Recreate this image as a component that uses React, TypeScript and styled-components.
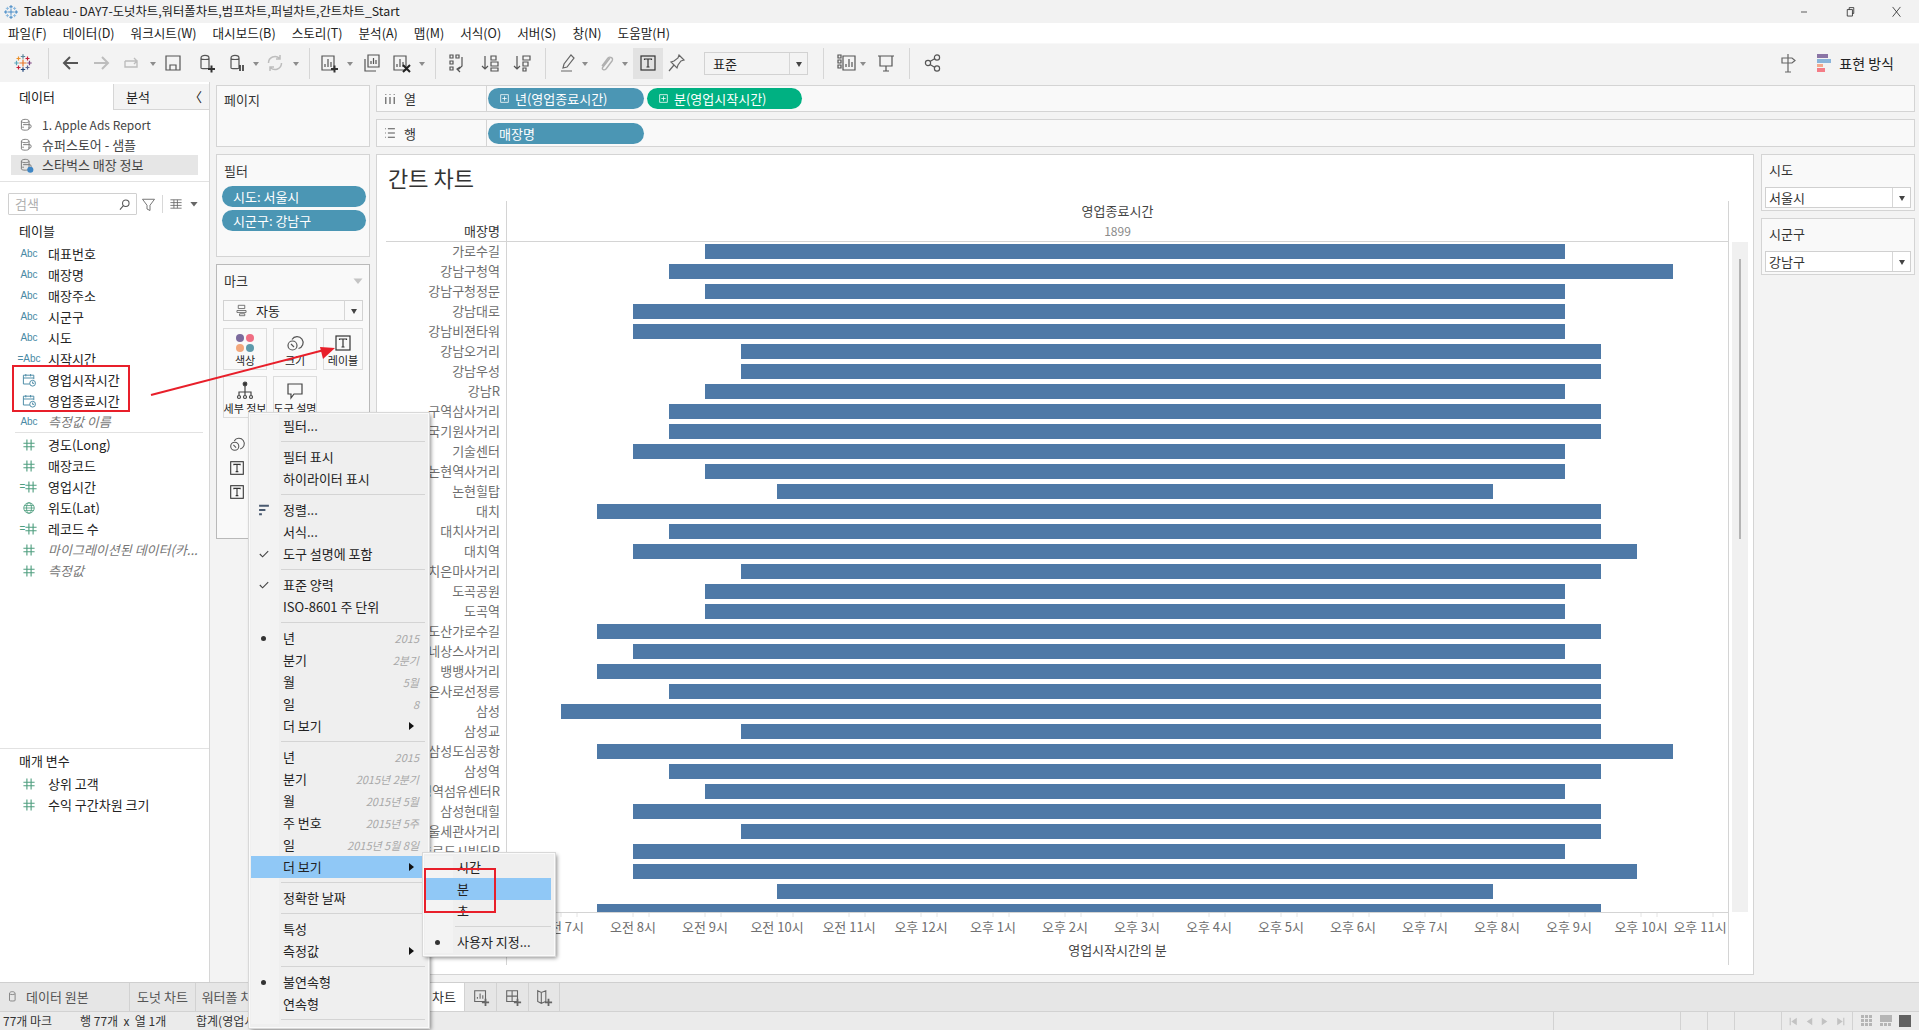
import React from "react";
import styled, { createGlobalStyle } from "styled-components";

const Global = createGlobalStyle`
  html, body { margin: 0; padding: 0; width: 1919px; height: 1030px; overflow: hidden; background: #f3f3f3; }
  body { font-family: "Noto Sans CJK KR", "Noto Sans", sans-serif; font-size: 13px; color: #222; }
  * { box-sizing: border-box; }
`;

const Page = styled.div`
  position: relative; width: 1919px; height: 1030px; overflow: hidden;
  display: flex; flex-direction: column; background: #f3f3f3;
`;

/* ---- window chrome ---- */
const TitleBar = styled.div`
  height: 23px; background: #f2f2f2; display: flex; align-items: center; padding-left: 3px; font-size: 12.35px; line-height: 23px; color: #222; flex: none;
`;
const TitleText = styled.span` margin-left: 5px; flex: 1; `;
const WinBtn = styled.span` width: 46px; height: 23px; display: flex; align-items: center; justify-content: center; `;
const MenuBar = styled.div`
  height: 20px; background: #fff; display: flex; padding-left: 8px; gap: 16px; line-height: 20px; font-size: 12.6px; flex: none;
`;
const Toolbar = styled.div`
  height: 39px; background: #f3f3f3; display: flex; align-items: center; padding-left: 11px; flex: none; border-top: 1px solid #f8f8f8;
`;
const Tool = styled.span<{ $ml: number; $w?: number; $active?: boolean }>`
  flex: none; margin-left: ${p => p.$ml}px; width: ${p => p.$w ?? 24}px; height: ${p => (p.$active ? 31 : 24)}px;
  display: flex; align-items: center; justify-content: center;
  background: ${p => (p.$active ? "#e2e2e2" : "transparent")};
`;
const ToolCaret = styled.span<{ $ml: number }>`
  flex: none; margin-left: ${p => p.$ml}px; width: 8px; display: flex; justify-content: center;
  &::after { content: ""; border: 3px solid transparent; border-top: 4px solid #8c8c8c; margin-top: 4px; }
`;
const ToolSep = styled.span<{ $ml: number }>`
  flex: none; margin-left: ${p => p.$ml}px; width: 1px; height: 31px; background: #d6d6d6;
`;
const ToolSelect = styled.div`
  flex: none; margin-left: 15px; width: 104px; height: 23px; border: 1px solid #d2d2d2; background: #f3f3f3;
  display: flex; align-items: center; padding-left: 8px; position: relative; line-height: 21px;
`;
const SelectText = styled.span` flex: 1; `;
const SelectBtn = styled.span`
  width: 18px; height: 21px; border-left: 1px solid #d6d6d6; display: flex; align-items: center; justify-content: center;
  &::after { content: ""; border: 3.5px solid transparent; border-top: 5px solid #444; margin-top: 5px; }
`;
const Spacer = styled.span` flex: 1; `;
const ShowMe = styled.span` margin-left: 17px; margin-right: 25px; display: flex; align-items: center; gap: 8px; line-height: 20px; font-size: 14px; `;

/* ---- main ---- */
const Main = styled.div` flex: 1; display: flex; min-height: 0; `;
const LeftPanel = styled.div`
  width: 210px; flex: none; background: #fff; border-right: 1px solid #d6d6d6; display: flex; flex-direction: column;
`;
const PaneTabs = styled.div` height: 28px; display: flex; flex: none; padding-top: 2px; `;
const PaneTab = styled.div<{ $on?: boolean }>`
  width: ${p => (p.$on ? 113 : 96)}px; flex: none; height: 26px; line-height: 26px; padding-left: ${p => (p.$on ? 19 : 12)}px;
  background: ${p => (p.$on ? "#fff" : "#f3f3f3")}; border-bottom: ${p => (p.$on ? "none" : "1px solid #d6d6d6")};
  border-left: ${p => (p.$on ? "none" : "1px solid #d6d6d6")};
  display: flex; justify-content: space-between; padding-right: 7px;
`;
const Sources = styled.div` padding: 5px 11px 7px; height: 72px; border-bottom: 1px solid #e2e2e2; flex: none; `;
const Source = styled.div<{ $on?: boolean; $latin?: boolean }>`
  height: 20px; line-height: 20px; display: flex; align-items: center; padding-left: 7px; gap: 7px; color: #444;
  font-size: ${p => (p.$latin ? "12px" : "13px")};
  background: ${p => (p.$on ? "#e6e6e6" : "transparent")};
`;
const SearchRow = styled.div` height: 38px; display: flex; align-items: center; padding: 6px 0 0 8px; flex: none; `;
const SearchBox = styled.div`
  width: 129px; height: 22px; border: 1px solid #d0d0d0; border-radius: 1px; display: flex; align-items: center; justify-content: space-between;
  padding: 0 5px 0 6px; color: #b0b0b0; line-height: 20px;
`;
const SmallSep = styled.span` width: 1px; height: 18px; background: #d8d8d8; margin: 0 6px 0 6px; `;
const FilterGap = styled.span` width: 4px; `;
const CaretGap = styled.span` width: 7px; `;
const FieldHead = styled.div` height: 23px; line-height: 22px; padding-left: 19px; font-size: 13px; flex: none; color: #222; `;
const FieldList = styled.div` flex: 1; display: flex; flex-direction: column; min-height: 0; `;
const FieldRow = styled.div<{ $italic?: boolean }>`
  height: 21px; flex: none; display: flex; align-items: center; padding-left: 16px; line-height: 21px; white-space: nowrap;
  color: ${p => (p.$italic ? "#777" : "#222")}; font-style: ${p => (p.$italic ? "italic" : "normal")};
`;
const FieldIcon = styled.span`
  width: 26px; flex: none; display: flex; justify-content: center; align-items: center; margin-right: 6px;
  font-family: "Liberation Sans", sans-serif; font-size: 10px; font-style: normal; color: #4a8aa5; letter-spacing: 0;
`;
const CalcMark = styled.span` color: #4f9e7f; margin-right: -1px; `;
const FieldDivider = styled.div` height: 1px; background: #e2e2e2; margin: 0 6px 1px 15px; flex: none; `;
const ParamPanel = styled.div` height: 234px; border-top: 1px solid #e2e2e2; padding-top: 1px; flex: none; `;

const Workspace = styled.div` flex: 1; display: flex; gap: 6px; padding: 3px 4px 7px 6px; min-width: 0; `;
const SideCol = styled.div` width: 154px; flex: none; display: flex; flex-direction: column; gap: 7px; `;
const SideCard = styled.div<{ $h: number; $dark?: boolean }>`
  height: ${p => p.$h}px; flex: none; background: #f9f9f9; border: 1px solid ${p => (p.$dark ? "#b9b9b9" : "#d4d4d4")};
  padding: 0 6px;
`;
const CardLabel = styled.div<{ $lh?: number }>`
  height: 31px; line-height: ${p => p.$lh ?? 31}px; padding-left: 1px; color: #333; display: flex; justify-content: space-between; align-items: flex-start;
  & > svg { margin-top: 11px; }
`;
const Pill = styled.div<{ $green?: boolean; $w: number }>`
  width: ${p => p.$w}px; height: 21px; border-radius: 11px; background: ${p => (p.$green ? "#00b182" : "#4b96b4")};
  color: #fff; line-height: 19px; display: flex; align-items: center; gap: 5px; padding-left: 11px; flex: none;
`;
const FilterPills = styled.div` display: flex; flex-direction: column; gap: 3px; margin-left: -1px; `;
const MarkSelect = styled.div`
  height: 21px; margin-top: 4px; border: 1px solid #d2d2d2; background: #f9f9f9; display: flex; align-items: center; padding-left: 11px; gap: 8px; line-height: 19px;
`;
const MarkGrid = styled.div` display: grid; grid-template-columns: 44px 44px 40px; grid-auto-rows: 42px; gap: 6px; margin-top: 7px; `;
const MarkBtn = styled.div`
  border: 1px solid #dcdcdc; display: flex; flex-direction: column; align-items: center; padding-top: 4px; font-size: 11px; line-height: 14px; white-space: nowrap; color: #222;
`;
const MarkDetail = styled.div` display: flex; flex-direction: column; gap: 6px; padding: 17px 0 0 5px; `;

const ContentCol = styled.div` flex: 1; min-width: 0; display: flex; flex-direction: column; gap: 7px; `;
const Shelf = styled.div<{ $h: number }>`
  height: ${p => p.$h}px; flex: none; background: #f9f9f9; border: 1px solid #d4d4d4; display: flex;
`;
const ShelfLabel = styled.div`
  width: 110px; flex: none; border-right: 1px solid #d4d4d4; display: flex; align-items: center; gap: 7px; padding-left: 6px; color: #333;
`;
const ShelfPills = styled.div` display: flex; gap: 3px; align-items: center; padding-left: 1px; `;
const Workrow = styled.div` flex: 1; min-height: 0; display: flex; gap: 7px; `;
const ChartCard = styled.div`
  width: 1378px; flex: none; background: #fff; border: 1px solid #d4d4d4; padding-left: 9px; display: flex; flex-direction: column;
`;
const ChartTitle = styled.div` height: 46px; line-height: 45px; font-size: 22px; color: #333; padding-left: 2px; flex: none; `;
const HeadRow = styled.div` height: 41px; flex: none; display: flex; `;
const HeadLabel = styled.div`
  width: 121px; flex: none; border-right: 1px solid #d4d4d4; border-bottom: 1px solid #d4d4d4; text-align: right; padding: 21px 6px 0 0; line-height: 18px; color: #333;
`;
const HeadPlot = styled.div`
  width: 1222px; flex: none; border-right: 1px solid #d4d4d4; border-bottom: 1px solid #d4d4d4; text-align: center; color: #444; line-height: 20px;
`;
const HeadSub = styled.div` color: #8a8a8a; font-size: 12px; `;
const BodyRow = styled.div` height: 670px; flex: none; display: flex; `;
const Rows = styled.div` width: 1343px; flex: none; height: 670px; overflow: hidden; `;
const Row = styled.div` height: 20px; display: flex; `;
const RowLabel = styled.div`
  width: 121px; flex: none; border-right: 1px solid #d4d4d4; text-align: right; padding-right: 6px; line-height: 17px; color: #6e6e6e; white-space: nowrap; overflow: hidden;
`;
const RowPlot = styled.div` flex: 1; border-right: 1px solid #d4d4d4; `;
const Bar = styled.div` height: 15px; margin-top: 2px; background: #4e79a7; `;
const ScrollTrack = styled.div` width: 16px; margin-left: 3px; height: 670px; background: #f0f0f0; display: flex; justify-content: center; padding-top: 17px; flex: none; `;
const ScrollThumb = styled.div` width: 2px; height: 280px; background: #b4b4b4; `;
const AxisRow = styled.div` height: 53px; flex: none; display: flex; `;
const AxisBlank = styled.div` width: 121px; flex: none; border-right: 1px solid #d4d4d4; `;
const AxisPlot = styled.div` width: 1222px; flex: none; border-right: 1px solid #d4d4d4; border-top: 1px solid #d4d4d4; display: flex; flex-direction: column; `;
const AxisTicks = styled.div` display: flex; padding: 2px 0 0 18px; height: 21px; line-height: 16px; color: #6e6e6e; `;
const AxisTick = styled.span<{ $shift?: boolean }>` width: 72px; flex: none; text-align: center; white-space: nowrap; margin-left: ${p => (p.$shift ? "-13px" : "0")}; `;
const AxisTitle = styled.div` text-align: center; color: #444; line-height: 20px; margin-top: 2px; `;

const FilterCol = styled.div` width: 154px; flex: none; display: flex; flex-direction: column; gap: 7px; `;
const QuickFilter = styled.div` height: 57px; background: #f9f9f9; border: 1px solid #d4d4d4; flex: none; padding: 0 3px; `;
const QuickLabel = styled.div` height: 29px; line-height: 29px; padding-left: 4px; color: #333; `;
const QuickSelect = styled.div`
  height: 21px; margin-top: 3px; border: 1px solid #d0d0d0; background: #fff; display: flex; line-height: 19px; padding-left: 3px; color: #333;
`;
const QuickBtn = styled.span`
  width: 18px; margin-left: auto; border-left: 1px solid #d6d6d6; display: flex; align-items: center; justify-content: center;
  &::after { content: ""; border: 3px solid transparent; border-top: 5px solid #444; margin-top: 4px; }
`;

/* ---- bottom ---- */
const TabBar = styled.div` height: 29px; flex: none; background: #e6e6e6; border-top: 1px solid #cfcfcf; display: flex; `;
const Tab = styled.div<{ $w: number; $on?: boolean; $start?: boolean }>`
  width: ${p => p.$w}px; flex: none; border-right: 1px solid #d2d2d2; display: flex; align-items: center; justify-content: ${p => (p.$start ? "flex-start" : "center")}; gap: 6px;
  padding-left: ${p => (p.$start ? 6 : 0)}px;
  line-height: 26px; color: ${p => (p.$on ? "#333" : "#555")}; background: ${p => (p.$on ? "#fff" : "transparent")}; white-space: nowrap; overflow: hidden;
`;
const StatusBar = styled.div` height: 19px; flex: none; background: #ebebeb; border-top: 1px solid #d2d2d2; display: flex; line-height: 18px; color: #333; font-size: 12px; `;
const StatusLeft = styled.div` width: 1553px; flex: none; display: flex; padding-left: 3px; white-space: nowrap; `;
const StatusItem = styled.span<{ $w: number }>` width: ${p => p.$w}px; flex: none; `;
const StatusCell = styled.div<{ $w: number }>`
  width: ${p => p.$w}px; flex: none; border-left: 1px solid #d2d2d2; display: flex; align-items: center; justify-content: space-around; padding: 0 4px;
`;

/* ---- overlays ---- */
const RedBox = styled.div<{ $sub?: boolean }>`
  position: absolute; border: 2px solid #e81f2a;
  left: ${p => (p.$sub ? 424 : 12)}px; top: ${p => (p.$sub ? 868 : 365)}px;
  width: ${p => (p.$sub ? 72 : 118)}px; height: ${p => (p.$sub ? 45 : 47)}px; z-index: ${p => (p.$sub ? 30 : 5)};
`;
const ArrowSvg = styled.svg` position: absolute; left: 150px; top: 340px; z-index: 5; `;
const CtxMenu = styled.div`
  position: absolute; left: 249px; top: 413px; width: 180px; z-index: 10; background: #efefef;
  border: 1px solid #fafafa; outline: 1px solid #d8d8d8; box-shadow: 2px 2px 4px rgba(0,0,0,.45); padding: 1px 0 3px;
`;
const SubMenu = styled(CtxMenu)` left: 423px; top: 853px; width: 132px; padding: 2px 0 2px; z-index: 20; `;
const MItem = styled.div<{ $hl?: boolean; $rail: number }>`
  height: 22px; display: flex; align-items: center; line-height: 22px; padding-right: 6px; margin: 0 3px 0 1px;
  background: ${p => (p.$hl ? "#90c8f6" : "transparent")}; color: #222;
`;
const MRail = styled.span<{ $hl?: boolean; $rail: number }>`
  width: ${p => p.$rail}px; flex: none; display: flex; justify-content: center; align-items: center; align-self: stretch;
  padding-right: 3px; background: ${p => (p.$hl ? "transparent" : "#f3f3f3")}; margin-right: 4px;
`;
const MText = styled.span` flex: 1; white-space: nowrap; `;
const MHint = styled.span` font-style: italic; font-size: 11px; color: #a8a8a8; white-space: nowrap; `;
const MArrow = styled.span`
  width: 0; height: 0; margin-right: 5px; border-left: 5px solid #111; border-top: 4px solid transparent; border-bottom: 4px solid transparent;
`;
const MSep = styled.div<{ $rail: number }>`
  height: 9px; display: flex; align-items: center; margin-left: 1px;
  &::before { content: ""; width: ${p => p.$rail}px; flex: none; align-self: stretch; background: #f3f3f3; }
  &::after { content: ""; flex: 1; height: 1px; background: #d4d4d4; margin: 0 3px 0 2px; }
`;
const Dot = styled.span` width: 5px; height: 5px; border-radius: 50%; background: #333; `;

/* ---- icons (drawings) ---- */
const S = styled.svg` display: block; flex: none; `;
type IcoProps = { size?: number; c?: string; w?: number; children: React.ReactNode };
const Ico = ({ size = 20, c = "#5a5a5a", w = 1.2, children }: IcoProps) => (
  <S width={size} height={size} viewBox="0 0 20 20" fill="none" stroke={c} strokeWidth={w}>{children}</S>
);
const Cyl = () => <path d="M5 5c0-3.5 8-3.5 8 0v10c0 1-8 1-8 0zM5 5c0 2 8 2 8 0" />;
const TBox = () => (<><rect x="3" y="3" width="14" height="14" stroke="#333" /><path d="M6.5 7V6h7v1M10 6v8M8.5 14h3" stroke="#333" /></>);
const SizeIco = () => (<><circle cx="7.5" cy="12.5" r="4.5" stroke="#555" /><path d="M7 6.5a6 6 0 1 1 6.5 9M6 11l3 3" stroke="#555" /></>);

const Logo = ({ size = 20, mono }: { size?: number; mono?: boolean }) => {
  const ps: [number, number, number, string][] = [
    [10, 10, 3.6, mono ? "#3f86c4" : "#e8762b"], [10, 3.5, 2.2, mono ? "#3f86c4" : "#5b879b"], [10, 16.5, 2.2, mono ? "#3f86c4" : "#1f447a"],
    [3.5, 10, 2.2, mono ? "#3f86c4" : "#59a5b8"], [16.5, 10, 2.2, mono ? "#3f86c4" : "#7a3f7d"],
    [5.5, 5.5, 2, mono ? "#8ab8de" : "#eb912b"], [14.5, 5.5, 2, mono ? "#8ab8de" : "#c72037"],
    [5.5, 14.5, 2, mono ? "#8ab8de" : "#c72037"], [14.5, 14.5, 2, mono ? "#8ab8de" : "#5b6591"],
  ];
  return (
    <S width={size} height={size} viewBox="0 0 20 20" fill="none" strokeWidth={1.2}>
      {ps.map(([x, y, r, col], i) => <path key={i} d={`M${x - r} ${y}h${2 * r}M${x} ${y - r}v${2 * r}`} stroke={col} />)}
    </S>
  );
};
const Hash = ({ c = "#4f9e7f" }: { c?: string }) => (
  <Ico size={14} c={c} w={1.6}><path d="M7 2v16M13 2v16M2 7.5h16M2 12.5h16" /></Ico>
);
const Cal = () => (
  <Ico size={16} c="#4a8aa5" w={1.2}>
    <path d="M11 15H3V4h13v5M3 7.5h13M6 2.5v3M12 2.5v3" /><circle cx="14.5" cy="14" r="3.6" /><path d="M14.5 12v2.2h2" />
  </Ico>
);
const DbIco = ({ on }: { on?: boolean }) => (
  <Ico size={17} c="#777" w={1.1}>
    <path d="M4 5c0-3 9-3 9 0v9c0 2-9 2-9 0zM4 5c0 2.2 9 2.2 9 0M6 9h8c2 0 2 4 0 4h-2M7 12h-2" />
    {on && <circle cx="14.5" cy="15" r="3.6" fill="#3f86c4" stroke="none" />}
  </Ico>
);

const fieldIcon = (t: string) => {
  switch (t) {
    case "abc": return <FieldIcon>Abc</FieldIcon>;
    case "cabc": return <FieldIcon>=Abc</FieldIcon>;
    case "cal": return <FieldIcon><Cal /></FieldIcon>;
    case "cnum": return <FieldIcon><CalcMark>=</CalcMark><Hash /></FieldIcon>;
    case "geo": return <FieldIcon><Ico size={14} c="#4f9e7f"><circle cx="10" cy="10" r="7.5" /><ellipse cx="10" cy="10" rx="3.5" ry="7.5" /><path d="M2.5 10h15M3.5 6.5h13M3.5 13.5h13" /></Ico></FieldIcon>;
    default: return <FieldIcon><Hash /></FieldIcon>;
  }
};

const dims: [string, string, boolean?][] = [
  ["abc", "대표번호"], ["abc", "매장명"], ["abc", "매장주소"], ["abc", "시군구"], ["abc", "시도"], ["cabc", "시작시간"],
  ["cal", "영업시작시간"], ["cal", "영업종료시간"], ["abc", "측정값 이름", true],
];
const meas: [string, string, boolean?][] = [
  ["num", "경도(Long)"], ["num", "매장코드"], ["cnum", "영업시간"], ["geo", "위도(Lat)"], ["cnum", "레코드 수"],
  ["num", "마이그레이션된 데이터(카...", true], ["num", "측정값", true],
];
const bars: [string, number, number][] = [
  ["가로수길", 705, 1565], ["강남구청역", 669, 1673], ["강남구청정문", 705, 1565], ["강남대로", 633, 1565], ["강남비젼타워", 633, 1565],
  ["강남오거리", 741, 1601], ["강남우성", 741, 1601], ["강남R", 705, 1565], ["구역삼사거리", 669, 1601], ["국기원사거리", 669, 1601],
  ["기술센터", 633, 1565], ["논현역사거리", 705, 1565], ["논현힐탑", 777, 1493], ["대치", 597, 1601], ["대치사거리", 669, 1601],
  ["대치역", 633, 1637], ["대치은마사거리", 741, 1601], ["도곡공원", 705, 1565], ["도곡역", 705, 1565], ["도산가로수길", 597, 1601],
  ["르네상스사거리", 633, 1565], ["뱅뱅사거리", 597, 1601], ["봉은사로선정릉", 669, 1601], ["삼성", 561, 1601], ["삼성교", 741, 1601],
  ["삼성도심공항", 597, 1673], ["삼성역", 669, 1601], ["삼성역섬유센터R", 705, 1565], ["삼성현대힐", 633, 1601], ["서울세관사거리", 741, 1601],
  ["석촌르도시빌딩R", 633, 1565], ["선릉", 633, 1637], ["선릉역", 777, 1493], ["선정릉", 597, 1601],
];
const PLOT_X = 507;
const hours = ["오전 7시", "오전 8시", "오전 9시", "오전 10시", "오전 11시", "오후 12시", "오후 1시", "오후 2시", "오후 3시", "오후 4시", "오후 5시", "오후 6시", "오후 7시", "오후 8시", "오후 9시", "오후 10시", "오후 11시"];
const tickPath = Array.from({ length: 17 }, (_, i) => `M${54 + 72 * i} 0v4M${70 + 72 * i} 0v4`).join("");

type M = { t?: string; hint?: string; mark?: "dot" | "check" | "sort"; arrow?: boolean; hl?: boolean; sep?: boolean };
const menu: M[] = [
  { t: "필터..." }, { sep: true }, { t: "필터 표시" }, { t: "하이라이터 표시" }, { sep: true },
  { t: "정렬...", mark: "sort" }, { t: "서식..." }, { t: "도구 설명에 포함", mark: "check" }, { sep: true },
  { t: "표준 양력", mark: "check" }, { t: "ISO-8601 주 단위" }, { sep: true },
  { t: "년", hint: "2015", mark: "dot" }, { t: "분기", hint: "2분기" }, { t: "월", hint: "5월" }, { t: "일", hint: "8" }, { t: "더 보기", arrow: true }, { sep: true },
  { t: "년", hint: "2015" }, { t: "분기", hint: "2015년 2분기" }, { t: "월", hint: "2015년 5월" }, { t: "주 번호", hint: "2015년 5주" }, { t: "일", hint: "2015년 5월 8일" }, { t: "더 보기", arrow: true, hl: true }, { sep: true },
  { t: "정확한 날짜" }, { sep: true }, { t: "특성" }, { t: "측정값", arrow: true }, { sep: true },
  { t: "불연속형", mark: "dot" }, { t: "연속형" }, { sep: true },
];
const sub: M[] = [{ t: "시간" }, { t: "분", hl: true }, { t: "초" }, { sep: true }, { t: "사용자 지정...", mark: "dot" }];

const renderMenu = (items: M[], rail: number) => items.map((m, i) => m.sep
  ? <MSep key={i} $rail={rail} />
  : (
    <MItem key={i} $hl={m.hl} $rail={rail}>
      <MRail $hl={m.hl} $rail={rail}>
        {m.mark === "dot" && <Dot />}
        {m.mark === "check" && <Ico size={14} c="#444" w={1.6}><path d="M4 10l4 4 8-8" /></Ico>}
        {m.mark === "sort" && <Ico size={14} c="#4a5a70" w={3}><path d="M3 4h14M3 10h9M3 16h4" /></Ico>}
      </MRail>
      <MText>{m.t}</MText>
      {m.hint && <MHint>{m.hint}</MHint>}
      {m.arrow && <MArrow />}
    </MItem>
  ));

export default function App() {
  return (
    <Page>
      <Global />
      <TitleBar>
        <Logo size={16} mono />
        <TitleText>Tableau - DAY7-도넛차트,워터폴차트,범프차트,퍼널차트,간트차트_Start</TitleText>
        <WinBtn><Ico size={12} c="#222"><path d="M5 10h10" /></Ico></WinBtn>
        <WinBtn><Ico size={13} c="#222"><path d="M5 7h8v10H5zM8 7V4h7v9h-2" /></Ico></WinBtn>
        <WinBtn><Ico size={13} c="#222"><path d="M4 3l12 15M16 3L4 18" /></Ico></WinBtn>
      </TitleBar>
      <MenuBar>
        {["파일(F)", "데이터(D)", "워크시트(W)", "대시보드(B)", "스토리(T)", "분석(A)", "맵(M)", "서식(O)", "서버(S)", "창(N)", "도움말(H)"].map(m => <span key={m}>{m}</span>)}
      </MenuBar>
      <Toolbar>
        <Tool $ml={0}><Logo /></Tool>
        <ToolSep $ml={13} />
        <Tool $ml={9}><Ico c="#555" w={2}><path d="M18 10H4M10 4l-6 6 6 6" /></Ico></Tool>
        <Tool $ml={8}><Ico c="#bdbdbd" w={2}><path d="M2 10h14M10 4l6 6-6 6" /></Ico></Tool>
        <Tool $ml={6}><Ico c="#bdbdbd" w={1.4}><path d="M3 8v6h12V8H3M12 5l3 3-3 3" /></Ico></Tool>
        <ToolCaret $ml={5} />
        <Tool $ml={4}><Ico c="#555"><path d="M3 3h14v14H3zM7 17v-5h6v5" /></Ico></Tool>
        <Tool $ml={9}><Ico c="#555"><Cyl /><path d="M12 16h7M15.5 12.5v7" strokeWidth={2} stroke="#333" /></Ico></Tool>
        <Tool $ml={6}><Ico c="#555"><Cyl /><path d="M14 12v6M17 12v6" stroke="#333" strokeWidth={1.6} /></Ico></Tool>
        <ToolCaret $ml={4} />
        <Tool $ml={3}><Ico c="#bdbdbd" w={1.5}><path d="M3.5 10a6.5 6.5 0 0 1 11-4.7M16.5 10a6.5 6.5 0 0 1-11 4.7M15 2v4h-4M5 18v-4h4" /></Ico></Tool>
        <ToolCaret $ml={5} />
        <ToolSep $ml={9} />
        <Tool $ml={7}><Ico c="#555"><path d="M3 3h12v14H3zM6 14v-3M9 14V6M12 14V9" /><path d="M12 16h7M15.5 12.5v7" strokeWidth={2} stroke="#333" /></Ico></Tool>
        <ToolCaret $ml={5} />
        <Tool $ml={6}><Ico c="#555"><path d="M6 2h11v12H6zM3 6v12h11M9 11V8M11.5 11V5M14 11V7" /></Ico></Tool>
        <Tool $ml={5}><Ico c="#555"><path d="M3 3h12v14H3zM6 14v-3M9 14V6M12 14V9" /><path d="M12 12l7 7M19 12l-7 7" strokeWidth={2} stroke="#222" /></Ico></Tool>
        <ToolCaret $ml={5} />
        <ToolSep $ml={9} />
        <Tool $ml={9}><Ico c="#555"><path d="M3 2h3v3H3zM9 2h3v3H9zM3 8h3v3H3zM3 14h3v3H3zM15 4v9l-3 3h-2M13 14l-3 2 3 3" /></Ico></Tool>
        <Tool $ml={9}><Ico c="#555"><path d="M5 3v13M2 13l3 3 3-3M11 3h5v4h-5zM11 9h7v4h-7zM11 15h7v3h-7z" /></Ico></Tool>
        <Tool $ml={8}><Ico c="#555"><path d="M5 3v13M2 13l3 3 3-3M11 3h7v4h-7zM11 9h5v4h-5zM11 15h3v3h-3z" /></Ico></Tool>
        <ToolSep $ml={11} />
        <Tool $ml={10}><Ico c="#666"><path d="M13 2l3 3-7 9-4 1 1-4zM3 18h11" /></Ico></Tool>
        <ToolCaret $ml={1} />
        <Tool $ml={5}><Ico c="#b0b0b0" w={1.4}><path d="M14 5l-7 9c-2 2 1 4 3 2l6-8c2-3-2-5-4-3l-6 8" /></Ico></Tool>
        <ToolCaret $ml={3} />
        <Tool $ml={4} $w={30} $active><Ico><TBox /></Ico></Tool>
        <Tool $ml={2}><Ico c="#666"><path d="M12 2l5 5-3 1-3 4-1 3-6-6 3-1 4-3zM7 12l-5 6" /></Ico></Tool>
        <ToolSelect><SelectText>표준</SelectText><SelectBtn /></ToolSelect>
        <ToolSep $ml={15} />
        <Tool $ml={10}><Ico c="#555"><path d="M2 2h3v3H2zM2 7h3v3H2zM2 12h3v3H2zM7 3h12v14H7zM10 14v-3M13 14V6M16 14V9" /></Ico></Tool>
        <ToolCaret $ml={1} />
        <Tool $ml={7}><Ico c="#555"><path d="M2 3h16M4 3v10h12V3M10 13v5M7 18h6" /></Ico></Tool>
        <ToolSep $ml={11} />
        <Tool $ml={11}><Ico c="#555"><circle cx="5" cy="10" r="2.6" /><circle cx="14" cy="4.5" r="2.6" /><circle cx="14" cy="15.5" r="2.6" /><path d="M7 8.5l5-3M7 11.5l5 3" /></Ico></Tool>
        <Spacer />
        <Tool $ml={0}><Ico c="#666"><path d="M10 1v18M7 19h6M4 5h10l3 2.5L14 10H4z" /></Ico></Tool>
        <ShowMe>
          <S width={14} height={18} viewBox="0 0 14 18"><rect x="0" y="0" width="11" height="4" fill="#8a74a5" /><rect x="0" y="5" width="14" height="4" fill="#8ab4d9" /><rect x="0" y="10" width="6" height="3" fill="#f3a98c" /><rect x="0" y="14" width="8" height="4" fill="#f47c86" /></S>
          표현 방식
        </ShowMe>
      </Toolbar>

      <Main>
        <LeftPanel>
          <PaneTabs>
            <PaneTab $on>데이터</PaneTab>
            <PaneTab>분석<span>〈</span></PaneTab>
          </PaneTabs>
          <Sources>
            <Source $latin><DbIco />1. Apple Ads Report</Source>
            <Source><DbIco />슈퍼스토어 - 샘플</Source>
            <Source $on><DbIco on />스타벅스 매장 정보</Source>
          </Sources>
          <SearchRow>
            <SearchBox>검색<Ico size={13} c="#555" w={1.6}><circle cx="12" cy="8" r="5" /><path d="M8 12l-5 6" /></Ico></SearchBox>
            <FilterGap />
            <Ico size={15} c="#666"><path d="M2 3h16l-6 8v7l-4-2v-5z" /></Ico>
            <SmallSep />
            <Ico size={14} c="#666"><path d="M2 4h16M2 8h16M2 12h16M2 16h16M7 4v12M12 4v12" /></Ico>
            <CaretGap />
            <Ico size={8} c="#666" w={0}><path d="M1 5h18L10 16z" fill="#666" /></Ico>
          </SearchRow>
          <FieldHead>테이블</FieldHead>
          <FieldList>
            {dims.map(([t, n, it]) => <FieldRow key={n} $italic={it}>{fieldIcon(t)}{n}</FieldRow>)}
            <FieldDivider />
            {meas.map(([t, n, it]) => <FieldRow key={n} $italic={it}>{fieldIcon(t)}{n}</FieldRow>)}
          </FieldList>
          <ParamPanel>
            <FieldHead>매개 변수</FieldHead>
            <FieldRow>{fieldIcon("num")}상위 고객</FieldRow>
            <FieldRow>{fieldIcon("num")}수익 구간차원 크기</FieldRow>
          </ParamPanel>
        </LeftPanel>

        <Workspace>
          <SideCol>
            <SideCard $h={62}><CardLabel $lh={27}>페이지</CardLabel></SideCard>
            <SideCard $h={103}>
              <CardLabel>필터</CardLabel>
              <FilterPills>
                <Pill $w={144}>시도: 서울시</Pill>
                <Pill $w={144}>시군구: 강남구</Pill>
              </FilterPills>
            </SideCard>
            <SideCard $h={275} $dark>
              <CardLabel>마크<Ico size={10} c="#bbb" w={0}><path d="M1 5h18L10 16z" fill="#c4c4c4" /></Ico></CardLabel>
              <MarkSelect>
                <Ico size={13} c="#555"><path d="M5 2h10v5H5zM3 10h14v3H3zM7 15h8v3H7z" /></Ico>
                <SelectText>자동</SelectText><SelectBtn />
              </MarkSelect>
              <MarkGrid>
                <MarkBtn>
                  <S width={20} height={20} viewBox="0 0 20 20"><circle cx="5" cy="5" r="4" fill="#7b6a9c" /><circle cx="15" cy="5" r="4" fill="#f06e83" /><circle cx="5" cy="15" r="4" fill="#f2a77c" /><circle cx="15" cy="15" r="4" fill="#5d9aab" /></S>
                  색상
                </MarkBtn>
                <MarkBtn><Ico><SizeIco /></Ico>크기</MarkBtn>
                <MarkBtn><Ico><TBox /></Ico>레이블</MarkBtn>
                <MarkBtn><Ico c="#444"><circle cx="10" cy="3" r="1.8" fill="#333" /><path d="M10 5v5M4 14v-3h12v3M10 10v4" /><circle cx="4" cy="16" r="1.5" /><circle cx="10" cy="16" r="1.5" /><circle cx="16" cy="16" r="1.5" /></Ico>세부 정보</MarkBtn>
                <MarkBtn><Ico c="#444"><path d="M3 3h14v10H9l-3 4v-4H3z" /></Ico>도구 설명</MarkBtn>
              </MarkGrid>
              <MarkDetail>
                <Ico size={18}><SizeIco /></Ico>
                <Ico size={18}><TBox /></Ico>
                <Ico size={18}><TBox /></Ico>
              </MarkDetail>
            </SideCard>
          </SideCol>

          <ContentCol>
            <Shelf $h={27}>
              <ShelfLabel><Ico size={14} c="#555" w={1.6}><path d="M4 3v1M4 7v10M10 3v1M10 7v10M16 3v1M16 7v10" /></Ico>열</ShelfLabel>
              <ShelfPills>
                <Pill $w={156}><Ico size={11} c="#fff" w={1.4}><path d="M3 3h14v14H3zM6 10h8M10 6v8" /></Ico>년(영업종료시간)</Pill>
                <Pill $w={155} $green><Ico size={11} c="#fff" w={1.4}><path d="M3 3h14v14H3zM6 10h8M10 6v8" /></Ico>분(영업시작시간)</Pill>
              </ShelfPills>
            </Shelf>
            <Shelf $h={28}>
              <ShelfLabel><Ico size={14} c="#555" w={1.6}><path d="M3 4h1M7 4h10M3 10h1M7 10h10M3 16h1M7 16h10" /></Ico>행</ShelfLabel>
              <ShelfPills><Pill $w={156}>매장명</Pill></ShelfPills>
            </Shelf>
            <Workrow>
              <ChartCard>
                <ChartTitle>간트 차트</ChartTitle>
                <HeadRow>
                  <HeadLabel>매장명</HeadLabel>
                  <HeadPlot>영업종료시간<HeadSub>1899</HeadSub></HeadPlot>
                </HeadRow>
                <BodyRow>
                  <Rows>
                    {bars.map(([n, a, b], i) => (
                      <Row key={i}>
                        <RowLabel>{n}</RowLabel>
                        <RowPlot><Bar style={{ marginLeft: a - PLOT_X, width: b - a }} /></RowPlot>
                      </Row>
                    ))}
                  </Rows>
                  <ScrollTrack><ScrollThumb /></ScrollTrack>
                </BodyRow>
                <AxisRow>
                  <AxisBlank />
                  <AxisPlot>
                    <S width={1221} height={4}><path d={tickPath} stroke="#e4e4e4" /></S>
                    <AxisTicks>{hours.map((h, i) => <AxisTick key={h} $shift={i === 16}>{h}</AxisTick>)}</AxisTicks>
                    <AxisTitle>영업시작시간의 분</AxisTitle>
                  </AxisPlot>
                </AxisRow>
              </ChartCard>
              <FilterCol>
                <QuickFilter><QuickLabel>시도</QuickLabel><QuickSelect>서울시<QuickBtn /></QuickSelect></QuickFilter>
                <QuickFilter><QuickLabel>시군구</QuickLabel><QuickSelect>강남구<QuickBtn /></QuickSelect></QuickFilter>
              </FilterCol>
            </Workrow>
          </ContentCol>
        </Workspace>
      </Main>

      <TabBar>
        <Tab $w={130} $start><Ico size={14} c="#777"><Cyl /></Ico>데이터 원본</Tab>
        <Tab $w={66}>도넛 차트</Tab>
        <Tab $w={75}>워터폴 차트</Tab>
        <Tab $w={63}>범프 차트</Tab>
        <Tab $w={63}>퍼널 차트</Tab>
        <Tab $w={68} $on>간트 차트</Tab>
        <Tab $w={32}><Ico size={18} c="#666"><path d="M3 3h12v12H3zM6 12v-2M9 12V6M12 12V8" /><path d="M11 16h8M15 12v8" strokeWidth={2} /></Ico></Tab>
        <Tab $w={32}><Ico size={18} c="#666"><path d="M3 3h12v12H3zM3 9h12M9 3v12" /><path d="M11 16h8M15 12v8" strokeWidth={2} /></Ico></Tab>
        <Tab $w={31}><Ico size={18} c="#666"><path d="M3 3l4 2 5-2v12l-5 2-4-2zM7 5v12" /><path d="M11 16h8M15 12v8" strokeWidth={2} /></Ico></Tab>
      </TabBar>
      <StatusBar>
        <StatusLeft>
          <StatusItem $w={77}>77개 마크</StatusItem>
          <StatusItem $w={116}>행 77개 &nbsp;x&nbsp; 열 1개</StatusItem>
          <StatusItem $w={150}>합계(영업시간): 0</StatusItem>
        </StatusLeft>
        <StatusCell $w={127} /><StatusCell $w={27} /><StatusCell $w={27} /><StatusCell $w={47} />
        <StatusCell $w={71}>
          <Ico size={11} c="#c2c2c2" w={0}><path d="M3 3h2v14H3zM16 3v14L6 10z" fill="#c2c2c2" /></Ico>
          <Ico size={11} c="#c2c2c2" w={0}><path d="M15 3v14L5 10z" fill="#c2c2c2" /></Ico>
          <Ico size={11} c="#c2c2c2" w={0}><path d="M5 3v14l10-7z" fill="#c2c2c2" /></Ico>
          <Ico size={11} c="#c2c2c2" w={0}><path d="M15 3h2v14h-2zM4 3v14l10-7z" fill="#c2c2c2" /></Ico>
        </StatusCell>
        <StatusCell $w={67}>
          <S width={12} height={12} viewBox="0 0 12 12" fill="#b5b5b5"><path d="M0 0h3v3H0zM4 0h3v3H4zM8 0h3v3H8zM0 4h3v3H0zM4 4h3v3H4zM8 4h3v3H8zM0 8h3v3H0zM4 8h3v3H4zM8 8h3v3H8z" /></S>
          <S width={12} height={12} viewBox="0 0 12 12" fill="#b5b5b5"><path d="M0 0h12v7H0zM0 8h3v3H0zM4 8h3v3H4zM8 8h3v3H8z" /></S>
          <S width={12} height={12} viewBox="0 0 12 12" fill="#616161"><path d="M0 0h12v12H0z" /></S>
        </StatusCell>
      </StatusBar>

      <RedBox />
      <ArrowSvg width={190} height={60} viewBox="0 0 190 60">
        <path d="M1 55L178 9" stroke="#e81f2a" strokeWidth={2} fill="none" />
        <path d="M185 8L170 7L173 19z" fill="#e81f2a" />
      </ArrowSvg>
      <CtxMenu>{renderMenu(menu, 28)}</CtxMenu>
      <SubMenu>{renderMenu(sub, 28)}</SubMenu>
      <RedBox $sub />
    </Page>
  );
}
